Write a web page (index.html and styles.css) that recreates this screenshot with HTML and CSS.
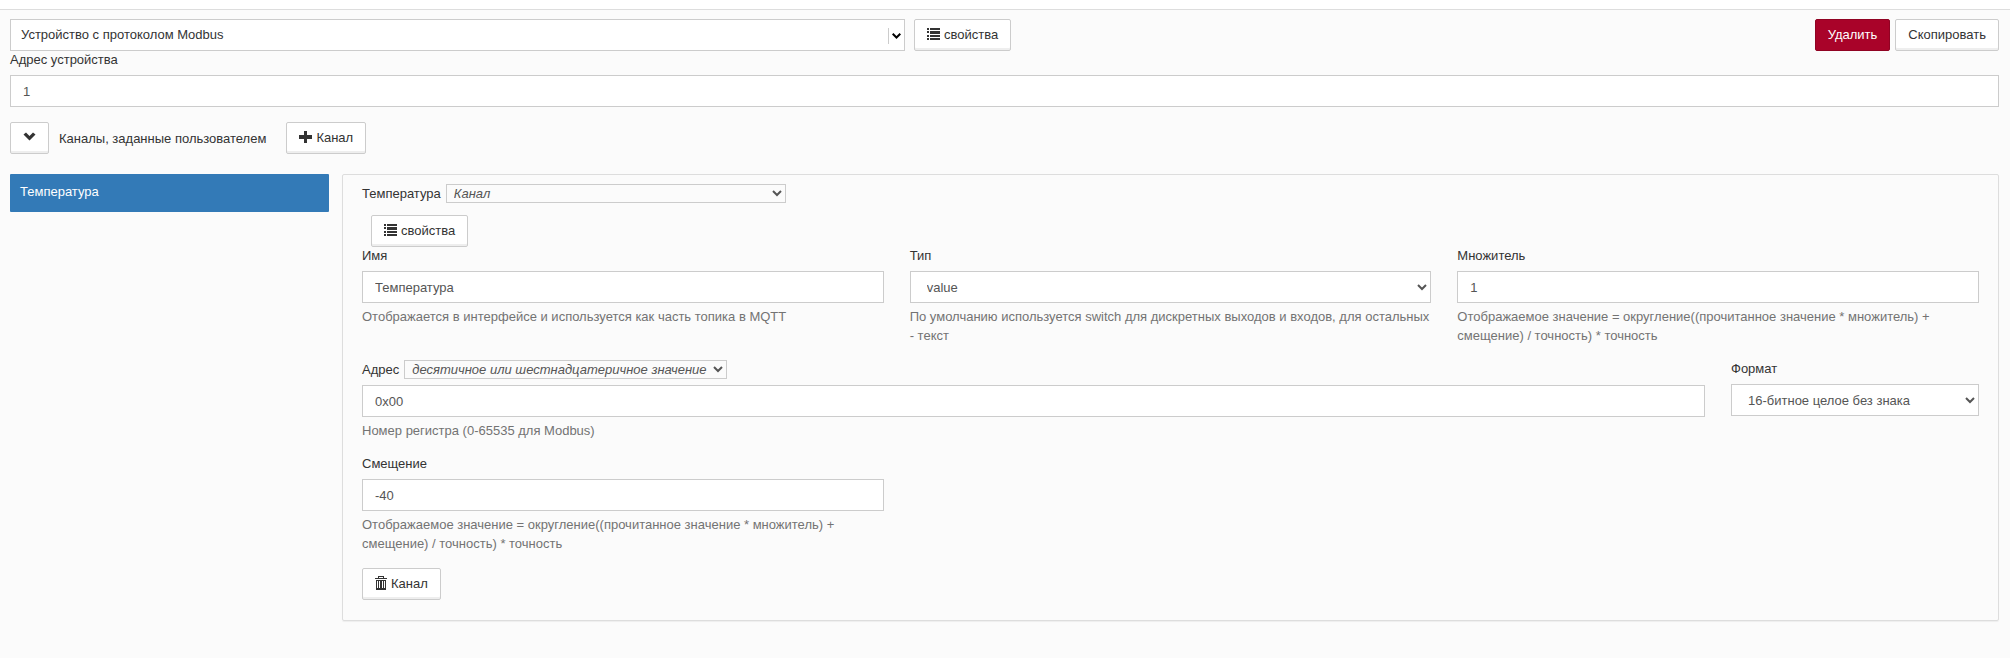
FILE: index.html
```html
<!DOCTYPE html>
<html lang="ru">
<head>
<meta charset="utf-8">
<title>Устройство с протоколом Modbus</title>
<link rel="stylesheet" href="styles.css">
</head>
<body>
<svg class="sprite" aria-hidden="true">
  <symbol id="icon-list" viewBox="0 0 13 12">
    <path d="M0 0h2v2H0zM3 0h10v2H3zM0 3h2v2H0zM3 3h10v3H3zM0 7h2v2H0zM3 7h10v2H3zM0 10h2v2H0zM3 10h10v2H3z"/>
  </symbol>
  <symbol id="icon-plus" viewBox="0 0 13 12">
    <path d="M5 0h3v4h5v4H8v4H5V8H0V4h5z"/>
  </symbol>
  <symbol id="icon-down" viewBox="0 0 13 12">
    <path d="M.5 3.500 3 1.500 6.500 5 10 1.500 12.500 3.500 6.500 9.500z"/>
  </symbol>
  <symbol id="icon-trash" viewBox="0 0 12 14">
    <path fill-rule="evenodd" d="M3 0h6v2h3v1H0V2h3zM4 1v1h4V1zM1 4h10v10H1zM2 5v7h1V5zM4 5v7h1V5zM7 5v7h1V5zM9 5v7h1V5z"/>
  </symbol>
</svg>

<main class="page">
  <div class="toolbar">
    <div class="picker">
      <select class="picker-select" aria-label="Тип устройства">
        <option>Устройство с протоколом Modbus</option>
      </select>
      <svg class="picker-arrow" viewBox="0 0 9 6" aria-hidden="true"><path d="M.7 .8 4.500 4.500 8.300 .8"/></svg>
    </div>
    <button class="btn" type="button"><svg class="icon"><use href="#icon-list"/></svg>свойства</button>
    <div class="toolbar-actions">
      <button class="btn btn-danger" type="button">Удалить</button>
      <button class="btn" type="button">Скопировать</button>
    </div>
  </div>

  <div class="field">
    <label class="label" for="device-address">Адрес устройства</label>
    <input class="control" id="device-address" type="text" value="1">
  </div>

  <div class="channels-bar">
    <button class="btn" type="button" aria-label="Свернуть"><svg class="icon"><use href="#icon-down"/></svg></button>
    <span class="channels-title">Каналы, заданные пользователем</span>
    <button class="btn" type="button"><svg class="icon"><use href="#icon-plus"/></svg>Канал</button>
  </div>

  <div class="channels">
    <nav class="tabs"><a class="tab" href="#channel">Температура</a></nav>

    <section class="panel" id="channel">
      <div class="label-row">
        <label for="channel-kind">Температура</label>
        <select class="mini-select kind-select" id="channel-kind"><option>Канал</option></select>
      </div>
      <div class="panel-tools">
        <button class="btn" type="button"><svg class="icon"><use href="#icon-list"/></svg>свойства</button>
      </div>

      <div class="form">
        <div class="row thirds">
          <div class="field">
            <label class="label" for="name">Имя</label>
            <input class="control" id="name" type="text" value="Температура">
            <p class="hint">Отображается в интерфейсе и используется как часть топика в MQTT</p>
          </div>
          <div class="field">
            <label class="label" for="type">Тип</label>
            <select class="control" id="type"><option>value</option></select>
            <p class="hint">По умолчанию используется switch для дискретных выходов и входов, для остальных - текст</p>
          </div>
          <div class="field">
            <label class="label" for="scale">Множитель</label>
            <input class="control" id="scale" type="text" value="1">
            <p class="hint">Отображаемое значение = округление((прочитанное значение * множитель) + смещение) / точность) * точность</p>
          </div>
        </div>

        <div class="row address-row">
          <div class="field">
            <div class="label-row">
              <label for="address">Адрес</label>
              <select class="mini-select" aria-label="Вид адреса"><option>десятичное или шестнадцатеричное значение</option></select>
            </div>
            <input class="control" id="address" type="text" value="0x00">
            <p class="hint">Номер регистра (0-65535 для Modbus)</p>
          </div>
          <div class="field">
            <label class="label" for="format">Формат</label>
            <select class="control" id="format"><option>16-битное целое без знака</option></select>
          </div>
        </div>

        <div class="row thirds">
          <div class="field">
            <label class="label" for="offset">Смещение</label>
            <input class="control" id="offset" type="text" value="-40">
            <p class="hint">Отображаемое значение = округление((прочитанное значение * множитель) + смещение) / точность) * точность</p>
          </div>
        </div>

        <div>
          <button class="btn" type="button"><svg class="icon icon-trash"><use href="#icon-trash"/></svg>Канал</button>
        </div>
      </div>
    </section>
  </div>
</main>
</body>
</html>
```
FILE: styles.css
```css
* {
  box-sizing: border-box;
}

html {
  background: #fbfbfb;
}

body {
  margin: 0;
  border-top: 9px solid #fff;
  color: #333;
  font: 13px/19px "Liberation Sans", Arial, sans-serif;
}

.sprite {
  display: none;
}

.page {
  padding: 9px 11px 20px 10px;
  border-top: 1px solid #ddd;
}

.toolbar {
  display: flex;
  gap: 9px;
}

.picker {
  position: relative;
  width: 45%;
}

.picker-select {
  display: block;
  width: 100%;
  height: 32px;
  padding: 0 32px 1px 10px;
  appearance: none;
  background: #fff;
  border: 1px solid #ccc;
  border-radius: 0;
  color: #333;
  font: inherit;
}

.picker::after {
  content: "";
  position: absolute;
  top: 9px;
  right: 16px;
  width: 1px;
  height: 16px;
  background: #ccc;
}

.picker-arrow {
  position: absolute;
  top: 14px;
  right: 4px;
  width: 9px;
  height: 6px;
  fill: none;
  stroke: #000;
  stroke-width: 2;
}

.toolbar-actions {
  display: flex;
  gap: 5px;
  margin-left: auto;
}

.btn {
  display: inline-flex;
  align-items: center;
  gap: 4px;
  height: 32px;
  padding: 0 12px 2px;
  background: #fff;
  border: 1px solid #ccc;
  border-radius: 2px;
  box-shadow: inset 0 -2px 0 #eee;
  color: #333;
  font: inherit;
  white-space: nowrap;
}

.btn-danger {
  background: #a90329;
  border-color: #900323;
  box-shadow: none;
  color: #fff;
}

.icon {
  width: 13px;
  height: 12px;
  fill: #333;
}

.icon-trash {
  width: 12px;
  height: 14px;
}

.label {
  display: block;
  margin-bottom: 6px;
  line-height: 18px;
}

.control {
  display: block;
  width: 100%;
  height: 32px;
  padding: 0 12px;
  background: #fff;
  border: 1px solid #ccc;
  border-radius: 0;
  color: #555;
  font: inherit;
}

.hint {
  margin: 4px 0 0;
  color: #737373;
}

.channels-bar {
  display: flex;
  align-items: center;
  margin: 15px 0 20px;
}

.channels-title {
  margin: 0 20px 0 10px;
}

.channels {
  display: grid;
  grid-template-columns: 319px 1fr;
  align-items: start;
  gap: 13px;
}

.tab {
  display: block;
  padding: 8px 10px 11px;
  background: #337ab7;
  border-radius: 1px;
  color: #fff;
  text-decoration: none;
}

.panel {
  padding: 9px 19px 20px;
  border: 1px solid #ddd;
  border-radius: 2px;
  box-shadow: 0 1px 1px #eee;
}

.label-row {
  display: flex;
  align-items: flex-start;
  gap: 5px;
  height: 20px;
}

.field .label-row {
  margin-bottom: 5px;
}

.mini-select {
  height: 19px;
  padding: 0 3px;
  background: #fbfbfb;
  border: 1px solid #ccc;
  border-radius: 0;
  color: #555;
  font: inherit;
  font-style: italic;
}

.kind-select {
  width: 340px;
}

.panel-tools {
  padding: 11px 0 0 9px;
}

.panel-tools .btn,
.form .btn {
  vertical-align: top;
}

.form {
  display: grid;
  gap: 15px;
}

.row {
  display: grid;
  align-items: start;
  gap: 26px;
}

.thirds {
  grid-template-columns: repeat(3, 1fr);
}

.address-row {
  grid-template-columns: 1fr 248px;
}
```
